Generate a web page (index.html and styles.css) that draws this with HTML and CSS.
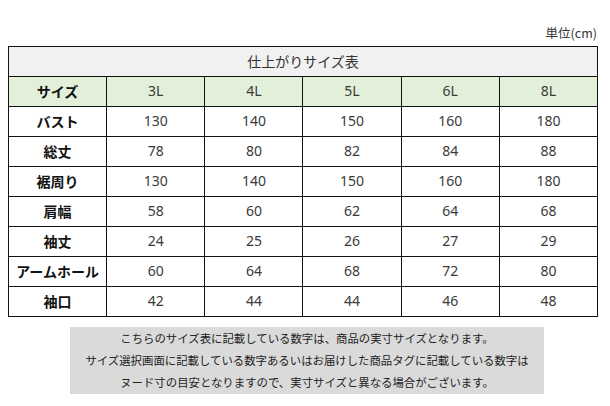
FILE: index.html
```html
<!DOCTYPE html>
<html lang="ja">
<head>
<meta charset="utf-8">
<link rel="stylesheet" href="styles.css">
</head>
<body>
<div class="page">
  <div class="unit">単位(cm)</div>
  <table class="size-table">
    <tr class="title-row"><td colspan="6">仕上がりサイズ表</td></tr>
    <tr class="head-row">
      <th>サイズ</th><td>3L</td><td>4L</td><td>5L</td><td>6L</td><td>8L</td>
    </tr>
    <tr><th>バスト</th><td>130</td><td>140</td><td>150</td><td>160</td><td>180</td></tr>
    <tr><th>総丈</th><td>78</td><td>80</td><td>82</td><td>84</td><td>88</td></tr>
    <tr><th>裾周り</th><td>130</td><td>140</td><td>150</td><td>160</td><td>180</td></tr>
    <tr><th>肩幅</th><td>58</td><td>60</td><td>62</td><td>64</td><td>68</td></tr>
    <tr><th>袖丈</th><td>24</td><td>25</td><td>26</td><td>27</td><td>29</td></tr>
    <tr><th>アームホール</th><td>60</td><td>64</td><td>68</td><td>72</td><td>80</td></tr>
    <tr><th>袖口</th><td>42</td><td>44</td><td>44</td><td>46</td><td>48</td></tr>
  </table>
  <div class="note">
    <p>こちらのサイズ表に記載している数字は、商品の実寸サイズとなります。</p>
    <p>サイズ選択画面に記載している数字あるいはお届けした商品タグに記載している数字は</p>
    <p>ヌード寸の目安となりますので、実寸サイズと異なる場合がございます。</p>
  </div>
</div>
</body>
</html>
```
FILE: styles.css
```css
html, body {
  margin: 0;
  padding: 0;
  background: #ffffff;
}
body {
  padding: 8px;
  font-family: "Noto Sans CJK JP", "Noto Sans", sans-serif;
  color: #333;
}
.page {
  display: flex;
  flex-direction: column;
  align-items: flex-start;
}
.unit {
  align-self: stretch;
  box-sizing: border-box;
  width: 590px;
  text-align: right;
  font-size: 12.5px;
  line-height: 16px;
  padding-top: 17px;
  padding-bottom: 5px;
  padding-right: 1px;
  color: #333;
}
.size-table {
  width: 590px;
  border-collapse: collapse;
  table-layout: fixed;
}
.size-table td, .size-table th {
  border: 1px solid #111;
  height: 27px;
  padding: 0 0 2px;
  text-align: center;
  vertical-align: middle;
  font-size: 14px;
  line-height: 18px;
  font-weight: 400;
  color: #3a3a3a;
  font-family: "Noto Sans", "Noto Sans CJK JP", sans-serif;
}
.size-table th {
  font-weight: 700;
  color: #111;
  font-family: "Noto Sans CJK JP", sans-serif;
}
.title-row td {
  background: #f1f1f1;
  font-family: "Noto Sans CJK JP", sans-serif;
  color: #333;
}
.head-row th, .head-row td {
  background: #e2efd9;
}
.note {
  margin-top: 10px;
  margin-left: 62px;
  width: 474px;
  background: #dadada;
  padding: 0 0 1px;
  text-align: center;
  font-size: 11.4px;
  line-height: 22px;
  color: #222;
}
.note p {
  margin: 0;
  white-space: nowrap;
}
```
